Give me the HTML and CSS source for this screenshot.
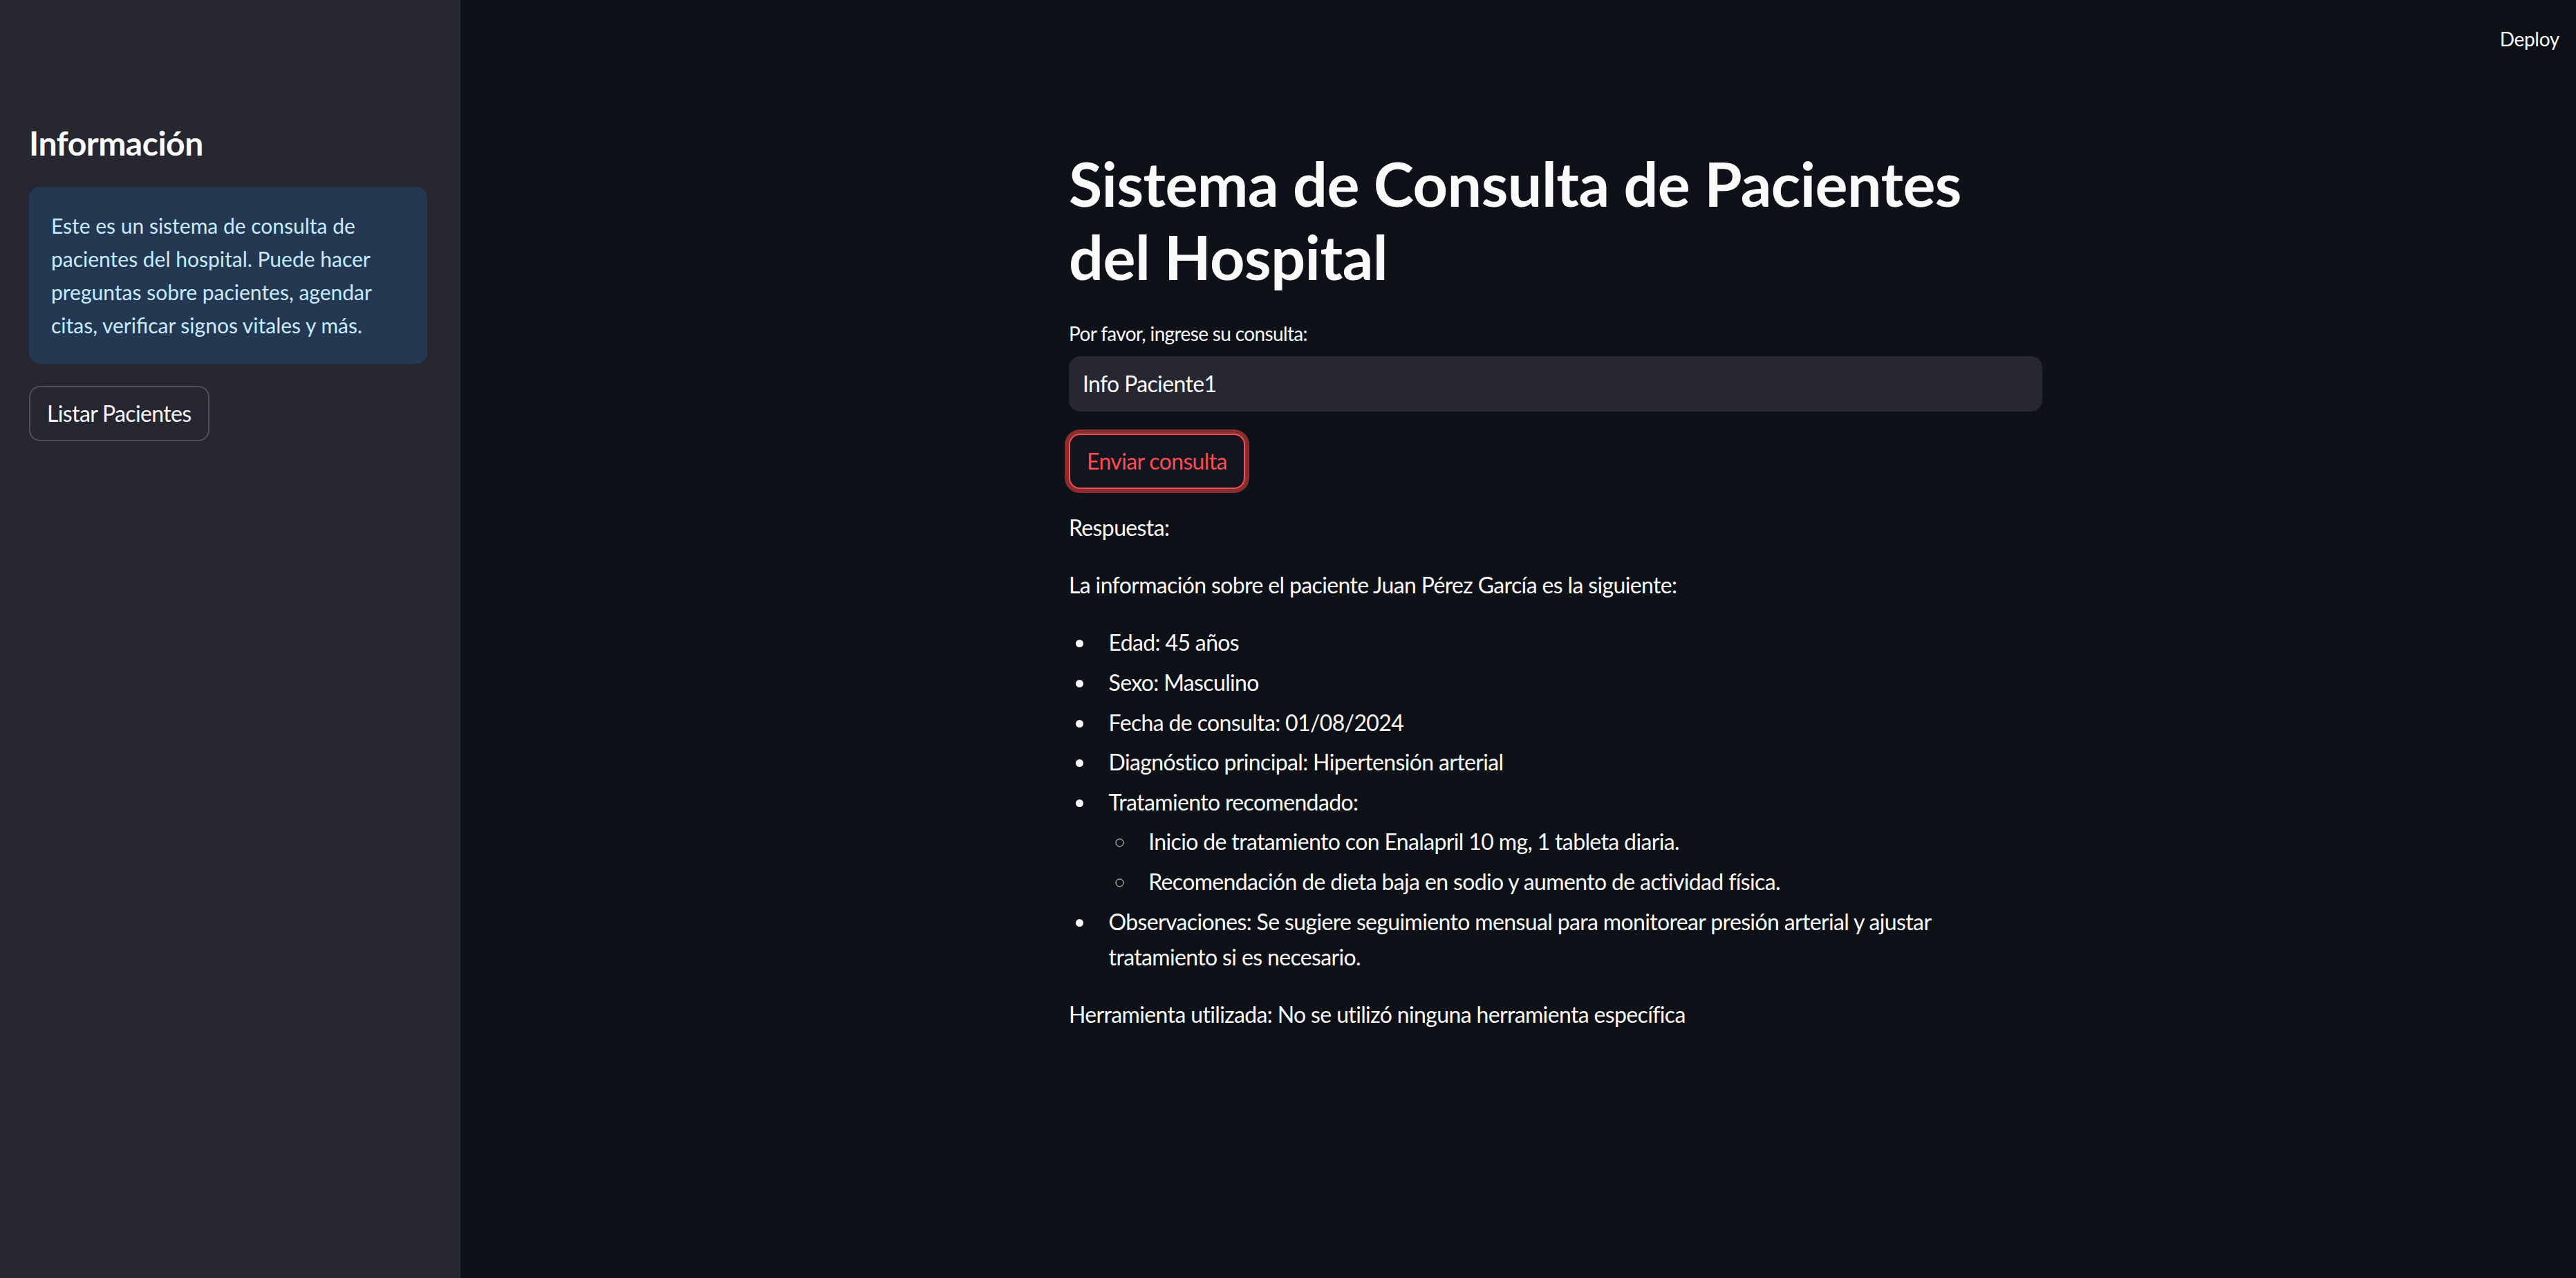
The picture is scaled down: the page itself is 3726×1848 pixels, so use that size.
FILE: index.html
```html
<!DOCTYPE html>
<html lang="es">
<head>
<meta charset="utf-8">
<title>Sistema de Consulta de Pacientes del Hospital</title>
<link rel="stylesheet" href="styles.css">
</head>
<body>
<div class="app">
  <aside class="sidebar">
    <h2 class="side-title">Información</h2>
    <div class="info-box">Este es un sistema de consulta de pacientes del hospital. Puede hacer preguntas sobre pacientes, agendar citas, verificar signos vitales y más.</div>
    <button class="btn btn-secondary" type="button">Listar Pacientes</button>
  </aside>
  <main class="main">
    <header class="topbar">
      <button class="deploy" type="button">Deploy</button>
    </header>
    <section class="block">
      <h1 class="title">Sistema de Consulta de Pacientes del Hospital</h1>
      <label class="field-label" for="q">Por favor, ingrese su consulta:</label>
      <div class="input-wrap"><input id="q" class="text-input" type="text" value="Info Paciente1"></div>
      <div class="btn-row"><button class="btn btn-focus" type="button">Enviar consulta</button></div>
      <p class="text respuesta">Respuesta:</p>
      <div class="markdown">
        <p class="text">La información sobre el paciente Juan Pérez García es la siguiente:</p>
        <ul class="list">
          <li>Edad: 45 años</li>
          <li>Sexo: Masculino</li>
          <li>Fecha de consulta: 01/08/2024</li>
          <li>Diagnóstico principal: Hipertensión arterial</li>
          <li>Tratamiento recomendado:
            <ul class="list sub">
              <li>Inicio de tratamiento con Enalapril 10 mg, 1 tableta diaria.</li>
              <li>Recomendación de dieta baja en sodio y aumento de actividad física.</li>
            </ul>
          </li>
          <li>Observaciones: Se sugiere seguimiento mensual para monitorear presión arterial y ajustar tratamiento si es necesario.</li>
        </ul>
        <p class="text tool">Herramienta utilizada: No se utilizó ninguna herramienta específica</p>
      </div>
    </section>
  </main>
</div>
</body>
</html>
```
FILE: styles.css
```css
* { box-sizing: border-box; }
html, body { margin: 0; padding: 0; }
body {
  background: #0e1117;
  color: #fafafa;
  font-family: Lato, "Noto Sans", sans-serif;
  font-size: 32px;
  letter-spacing: -0.02em;
}
.app {
  display: flex;
  min-height: 1848px;
}
.sidebar {
  width: 666px;
  flex: 0 0 666px;
  background: #262730;
  padding: 178px 48px 0 42px;
  display: flex;
  flex-direction: column;
  align-items: flex-start;
}
.side-title {
  margin: 0;
  font-size: 48px;
  font-weight: 700;
  line-height: 57.6px;
  letter-spacing: -0.01em;
  color: #fafafa;
}
.info-box {
  margin-top: 34px;
  width: 100%;
  background: #253852;
  color: #c7ebff;
  border-radius: 16px;
  padding: 32px;
  font-size: 30px;
  line-height: 48px;
  letter-spacing: 0;
}
.btn {
  font-family: inherit;
  font-size: 32px;
  letter-spacing: -0.02em;
  line-height: 51.2px;
  height: 80px;
  padding: 0 24px;
  border-radius: 16px;
  cursor: pointer;
}
.btn-secondary {
  margin-top: 32px;
  background: #262730;
  color: #fafafa;
  border: 2px solid rgba(250, 250, 250, 0.2);
}
.main {
  flex: 1;
  display: flex;
  flex-direction: column;
  padding-left: 108px;
}
.topbar {
  height: 120px;
  display: flex;
  justify-content: flex-end;
  align-items: center;
  padding-right: 10px;
}
.deploy {
  background: transparent;
  border: none;
  color: #fafafa;
  font-family: inherit;
  font-size: 28px;
  letter-spacing: -0.01em;
  padding: 8px 14px;
  margin-top: -8px;
}
.block {
  width: 1408px;
  margin: 0 auto;
  padding-top: 93px;
  display: flex;
  flex-direction: column;
}
.title {
  margin: 0;
  font-size: 88px;
  font-weight: 700;
  line-height: 105.6px;
  letter-spacing: -0.006em;
}
.field-label {
  margin-top: 36px;
  font-size: 28px;
  line-height: 44.8px;
}
.input-wrap {
  margin-top: 10px;
  height: 80px;
  background: #262730;
  border-radius: 16px;
  display: flex;
}
.text-input {
  flex: 1;
  background: transparent;
  border: none;
  outline: none;
  color: #fafafa;
  font-family: inherit;
  font-size: 32px;
  letter-spacing: -0.02em;
  padding: 0 20px;
}
.btn-row {
  margin-top: 32px;
  display: flex;
}
.btn-focus {
  background: #121520;
  color: #ff4b4b;
  border: 2px solid #ff4b4b;
  box-shadow: 0 0 0 6px rgba(255, 75, 75, 0.5);
}
.text {
  margin: 0;
  line-height: 51.2px;
}
.respuesta { margin-top: 30px; }
.markdown { margin-top: 32px; }
.list {
  margin: 32px 0 0;
  padding: 0;
  line-height: 51.2px;
}
.list li {
  margin: 6.4px 0 6.4px 38.4px;
  padding-left: 19.2px;
}
.list.sub {
  margin: 0;
  list-style-type: circle;
}
.tool { margin-top: 32px; }
```
